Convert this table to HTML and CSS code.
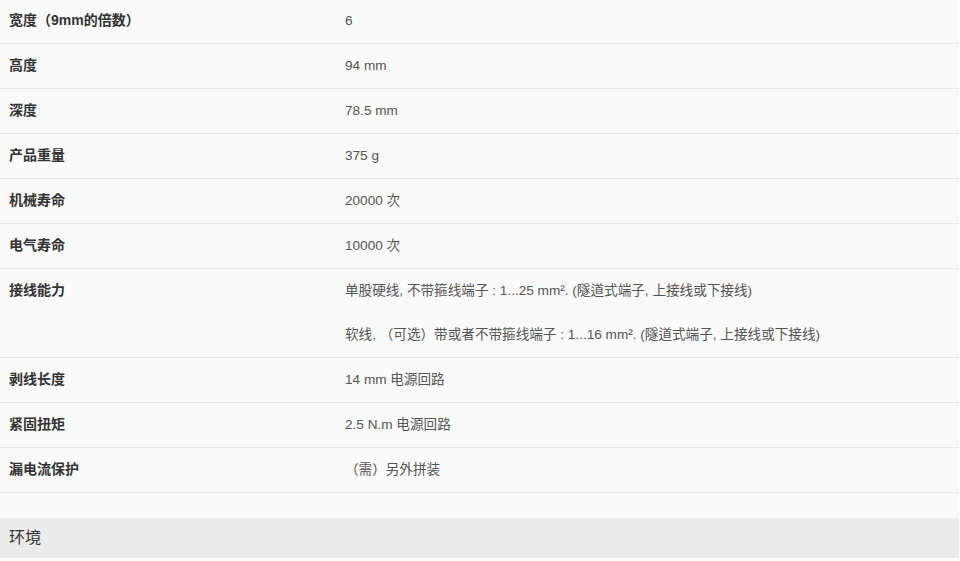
FILE: index.html
```html
<!DOCTYPE html>
<html>
<head>
<meta charset="utf-8">
<link rel="stylesheet" href="styles.css">
</head>
<body>
<div class="page">
  <div class="specs">
    <div class="row"><div class="label">宽度（9mm的倍数）</div><div class="value"><p>6</p></div></div>
    <div class="row"><div class="label">高度</div><div class="value"><p>94 mm</p></div></div>
    <div class="row"><div class="label">深度</div><div class="value"><p>78.5 mm</p></div></div>
    <div class="row"><div class="label">产品重量</div><div class="value"><p>375 g</p></div></div>
    <div class="row"><div class="label">机械寿命</div><div class="value"><p>20000 次</p></div></div>
    <div class="row"><div class="label">电气寿命</div><div class="value"><p>10000 次</p></div></div>
    <div class="row"><div class="label">接线能力</div><div class="value"><p>单股硬线, 不带箍线端子 : 1...25 mm². (隧道式端子, 上接线或下接线)</p><p>软线, （可选）带或者不带箍线端子 : 1...16 mm². (隧道式端子, 上接线或下接线)</p></div></div>
    <div class="row"><div class="label">剥线长度</div><div class="value"><p>14 mm 电源回路</p></div></div>
    <div class="row"><div class="label">紧固扭矩</div><div class="value"><p>2.5 N.m 电源回路</p></div></div>
    <div class="row"><div class="label">漏电流保护</div><div class="value"><p>（需）另外拼装</p></div></div>
  </div>
  <div class="section">环境</div>
</div>
</body>
</html>
```
FILE: styles.css
```css
html, body {
  margin: 0;
  padding: 0;
  background: #ffffff;
}
.page {
  width: 959px;
  background: #fafafa;
  font-family: "Liberation Sans", "Noto Sans CJK KR", "Noto Sans CJK SC", sans-serif;
  overflow: hidden;
}
.specs {
  margin-top: -1px;
}
.row {
  display: grid;
  grid-template-columns: 336px 1fr;
  padding-left: 9px;
  border-bottom: 1px solid #e6e6e6;
}
.label {
  font-size: 14px;
  font-weight: bold;
  color: #333333;
  line-height: 43px;
  padding-bottom: 1px;
}
.value p {
  margin: 0;
  font-size: 13.6px;
  color: #555555;
  line-height: 43px;
  padding-bottom: 1px;
}
.section {
  margin-top: 25px;
  height: 40px;
  line-height: 39px;
  padding-bottom: 1px;
  box-sizing: border-box;
  background: #ebebeb;
  color: #333333;
  font-size: 16px;
  padding-left: 9px;
}
```
